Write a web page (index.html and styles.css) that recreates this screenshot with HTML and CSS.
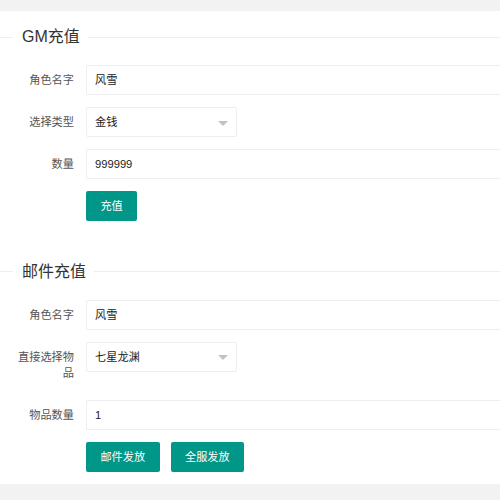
FILE: index.html
```html
<!DOCTYPE html>
<html lang="zh-CN">
<head>
<meta charset="utf-8">
<title>GM充值</title>
<link rel="stylesheet" href="styles.css">
</head>
<body>
<div class="card">
  <section class="section">
    <div class="legend-row"><span class="line-start"></span><span class="legend">GM充值</span><span class="line-rest"></span></div>
    <div class="form-item">
      <label class="form-label">角色名字</label>
      <div class="input-block"><div class="input">风雪</div></div>
    </div>
    <div class="form-item">
      <label class="form-label">选择类型</label>
      <div class="select"><span>金钱</span><i class="arrow"></i></div>
    </div>
    <div class="form-item">
      <label class="form-label">数量</label>
      <div class="input-block"><div class="input">999999</div></div>
    </div>
    <div class="form-item">
      <span class="form-label"></span>
      <div class="buttons"><button class="btn">充值</button></div>
    </div>
  </section>
  <section class="section second">
    <div class="legend-row"><span class="line-start"></span><span class="legend">邮件充值</span><span class="line-rest"></span></div>
    <div class="form-item">
      <label class="form-label">角色名字</label>
      <div class="input-block"><div class="input">风雪</div></div>
    </div>
    <div class="form-item">
      <label class="form-label">直接选择物品</label>
      <div class="select"><span>七星龙渊</span><i class="arrow"></i></div>
    </div>
    <div class="form-item">
      <label class="form-label">物品数量</label>
      <div class="input-block"><div class="input">1</div></div>
    </div>
    <div class="form-item">
      <span class="form-label"></span>
      <div class="buttons"><button class="btn">邮件发放</button><button class="btn">全服发放</button></div>
    </div>
  </section>
</div>
</body>
</html>
```

FILE: styles.css
```css
html, body {
  margin: 0;
  padding: 0;
  overflow: hidden;
}
body {
  background: #f2f2f2;
  padding-top: 11px;
  font-family: "Liberation Sans", "Noto Sans CJK SC", sans-serif;
  font-size: 11.2px;
  color: #333;
  height: 500px;
  box-sizing: border-box;
}
.card {
  background: #fff;
  padding-top: 16px;
  padding-bottom: 0.3px;
}
.section.second {
  padding-top: 28.5px;
}
.legend-row {
  display: flex;
  align-items: center;
  height: 20px;
  margin-bottom: 18px;
}
.line-start {
  width: 13px;
  border-top: 1px solid #eee;
}
.line-rest {
  flex: 1;
  border-top: 1px solid #eee;
}
.legend {
  padding: 0 8px 0 9px;
  font-size: 16px;
  line-height: 20px;
  color: #333;
}
.form-item {
  display: flex;
  align-items: flex-start;
  margin-bottom: 12px;
}
.form-label {
  width: 62px;
  flex: none;
  padding: 7px 12px;
  line-height: 16px;
  text-align: right;
  color: #555;
}
.input-block {
  flex: 1;
  min-width: 0;
}
.input, .select {
  height: 30px;
  box-sizing: border-box;
  border: 1px solid #eee;
  border-radius: 2px;
  padding-left: 8px;
  line-height: 28px;
  color: #222;
  background: #fff;
}
.input {
  border-right: none;
  border-radius: 2px 0 0 2px;
}
.select {
  width: 151px;
  flex: none;
  display: flex;
  align-items: center;
  justify-content: space-between;
  padding-right: 8px;
}
.arrow {
  width: 0;
  height: 0;
  border-left: 5px solid transparent;
  border-right: 5px solid transparent;
  border-top: 5px solid #c2c2c2;
  margin-top: 2px;
}
.buttons {
  display: flex;
  gap: 11px;
}
.btn {
  height: 30px;
  padding: 0 14.4px;
  border: none;
  border-radius: 2px;
  background: #009688;
  color: #fff;
  font-family: inherit;
  font-size: 11.2px;
  line-height: 30px;
  cursor: pointer;
}
```
